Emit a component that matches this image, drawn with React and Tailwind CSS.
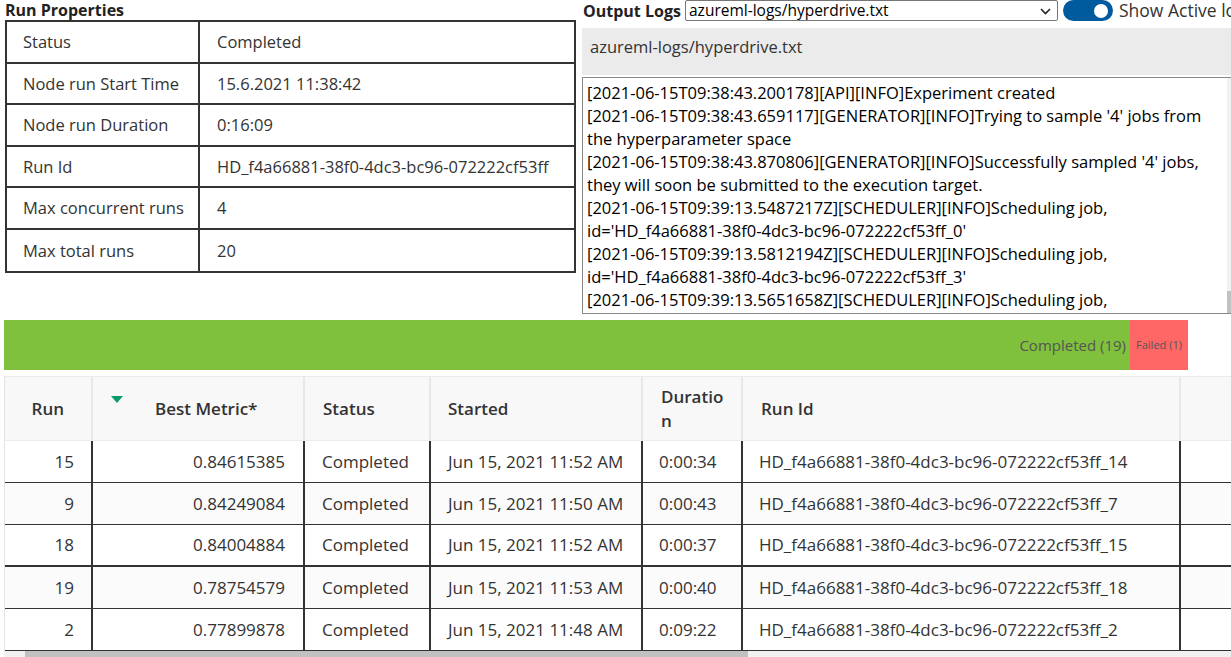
import React from "react";

const props = [
  ["Status", "Completed"],
  ["Node run Start Time", "15.6.2021 11:38:42"],
  ["Node run Duration", "0:16:09"],
  ["Run Id", "HD_f4a66881-38f0-4dc3-bc96-072222cf53ff"],
  ["Max concurrent runs", "4"],
  ["Max total runs", "20"],
];

const logs = [
  "[2021-06-15T09:38:43.200178][API][INFO]Experiment created",
  "[2021-06-15T09:38:43.659117][GENERATOR][INFO]Trying to sample '4' jobs from",
  "the hyperparameter space",
  "[2021-06-15T09:38:43.870806][GENERATOR][INFO]Successfully sampled '4' jobs,",
  "they will soon be submitted to the execution target.",
  "[2021-06-15T09:39:13.5487217Z][SCHEDULER][INFO]Scheduling job,",
  "id='HD_f4a66881-38f0-4dc3-bc96-072222cf53ff_0'",
  "[2021-06-15T09:39:13.5812194Z][SCHEDULER][INFO]Scheduling job,",
  "id='HD_f4a66881-38f0-4dc3-bc96-072222cf53ff_3'",
  "[2021-06-15T09:39:13.5651658Z][SCHEDULER][INFO]Scheduling job,",
];

const rows = [
  ["15", "0.84615385", "Completed", "Jun 15, 2021 11:52 AM", "0:00:34", "HD_f4a66881-38f0-4dc3-bc96-072222cf53ff_14"],
  ["9", "0.84249084", "Completed", "Jun 15, 2021 11:50 AM", "0:00:43", "HD_f4a66881-38f0-4dc3-bc96-072222cf53ff_7"],
  ["18", "0.84004884", "Completed", "Jun 15, 2021 11:52 AM", "0:00:37", "HD_f4a66881-38f0-4dc3-bc96-072222cf53ff_15"],
  ["19", "0.78754579", "Completed", "Jun 15, 2021 11:53 AM", "0:00:40", "HD_f4a66881-38f0-4dc3-bc96-072222cf53ff_18"],
  ["2", "0.77899878", "Completed", "Jun 15, 2021 11:48 AM", "0:09:22", "HD_f4a66881-38f0-4dc3-bc96-072222cf53ff_2"],
];

export default function App() {
  return (
    <div className="w-[1231px] h-[657px] overflow-hidden bg-white text-[#333] font-['Open_Sans','Noto_Sans',sans-serif]">
      {/* top section */}
      <div className="flex h-[320px]">
        {/* left */}
        <div className="w-[582px] shrink-0 pl-[5px]">
          <div className="h-[20px] text-[16px] leading-[20px] font-bold text-[#222] whitespace-nowrap">Run Properties</div>
          <div className="w-[571px] border-2 border-[#333]">
            {props.map(([k, v], i) => (
              <div
                key={k}
                className={`flex h-[41.5px] items-center text-[16.5px] ${i < props.length - 1 ? "border-b-2 border-[#333]" : ""}`}
              >
                <div className="w-[193px] h-full flex items-center pl-[16px] pt-[2px] border-r-2 border-[#333]">{k}</div>
                <div className="flex-1 pl-[17px] pt-[2px]">{v}</div>
              </div>
            ))}
          </div>
        </div>
        {/* right */}
        <div className="flex-1 min-w-0 flex flex-col overflow-hidden">
          <div className="flex items-center h-[21px] whitespace-nowrap">
            <span className="shrink-0 text-[16px] font-bold text-[#222] pl-[1px] w-[103px]">Output Logs</span>
            <div className="shrink-0 w-[373px] h-[21px] border border-[#767676] rounded-[2px] flex items-center justify-between pl-[3px] pr-[6px] text-[15.5px] text-black">
              <span>azureml-logs/hyperdrive.txt</span>
              <svg width="11" height="7" viewBox="0 0 11 7" className="mt-[1px]">
                <path d="M1 1l4.5 4.5L10 1" fill="none" stroke="#222" strokeWidth="1.6" />
              </svg>
            </div>
            <div className="shrink-0 ml-[5px] w-[50px] h-[21px] rounded-full bg-[#005a9e] flex items-center justify-end pr-[5px]">
              <div className="w-[14px] h-[14px] rounded-full bg-white" />
            </div>
            <span className="shrink-0 ml-[6px] text-[17.5px] text-[#333]">Show Active logs</span>
          </div>
          <div className="mt-[7px] h-[47px] bg-[#ebebeb] pt-[7px] pl-[8px] text-[16.5px] leading-[24px] text-[#333]">
            azureml-logs/hyperdrive.txt
          </div>
          <div className="mt-[2px] h-[237px] border border-[#888] border-r-0 relative overflow-hidden pl-[4px] pt-[3px]">
            {logs.map((l, i) => (
              <div key={i} className="text-[16.5px] leading-[23px] text-black whitespace-nowrap">{l}</div>
            ))}
            <div className="absolute right-0 top-0 bottom-0 w-[4px] bg-[#f1f1f1]">
              <div className="absolute bottom-0 w-[4px] h-[22px] bg-[#c1c1c1]" />
            </div>
          </div>
        </div>
      </div>

      {/* progress bar */}
      <div className="flex pl-[4px] h-[50px]">
        <div className="w-[1126px] bg-[#7fc03c] flex items-center justify-end pr-[4px] text-[15px] text-[#555]">Completed (19)</div>
        <div className="w-[58px] bg-[#ff6666] flex items-center justify-center text-[11px] text-[#555]">Failed (1)</div>
      </div>

      {/* runs table */}
      <div className="mt-[6px] ml-[4px] border-l border-[#e3e3e3] w-[1300px]">
        <div className="flex h-[65px] bg-[#f8f8f8] border-t border-[#ebebeb] border-b border-b-[#ebebeb] text-[17px] font-semibold text-[#333]">
          <div className="w-[88px] flex items-center justify-end pr-[27px] border-r-2 border-[#e8e8e8]">Run</div>
          <div className="w-[212px] relative flex items-center pl-[62px] border-r-2 border-[#e8e8e8]">
            <svg width="12" height="7" viewBox="0 0 12 7" className="absolute left-[18px] top-[19px]">
              <path d="M0 0h12L6 7z" fill="#0a9a6b" />
            </svg>
            Best Metric*
          </div>
          <div className="w-[126px] flex items-center pl-[18px] border-r-2 border-[#e8e8e8]">Status</div>
          <div className="w-[212px] flex items-center pl-[17px] border-r-2 border-[#e8e8e8]">Started</div>
          <div className="w-[100px] flex items-center pl-[18px] pr-[10px] border-r-2 border-[#e8e8e8] leading-[24px]">
            <span className="break-all">Duratio n</span>
          </div>
          <div className="w-[438px] flex items-center pl-[18px] border-r-2 border-[#e8e8e8]">Run Id</div>
          <div className="flex-1" />
        </div>
        {rows.map((r, i) => (
          <div
            key={i}
            className={`flex h-[42px] text-[17px] text-[#333] ${i % 2 === 1 ? "bg-[#fbfbfb]" : "bg-white"} ${i === 2 ? "border-b-2" : "border-b"} border-[#333]`}
          >
            <div className="w-[88px] flex items-center justify-end pr-[17px] border-r-2 border-[#333]">{r[0]}</div>
            <div className="w-[212px] flex items-center justify-end pr-[18px] border-r-2 border-[#333]">{r[1]}</div>
            <div className="w-[126px] flex items-center pl-[17px] border-r-2 border-[#333]">{r[2]}</div>
            <div className="w-[212px] flex items-center pl-[17px] border-r-2 border-[#333]">{r[3]}</div>
            <div className="w-[100px] flex items-center pl-[16px] border-r-2 border-[#333]">{r[4]}</div>
            <div className="w-[438px] flex items-center pl-[16px] border-r-2 border-[#333]">{r[5]}</div>
            <div className="flex-1" />
          </div>
        ))}
      </div>
      <div className="h-[8px] bg-[#f1f1f1] ml-[4px] flex items-start">
        <div className="ml-[21px] w-[723px] h-[8px] bg-[#c1c1c1]" />
      </div>
    </div>
  );
}
